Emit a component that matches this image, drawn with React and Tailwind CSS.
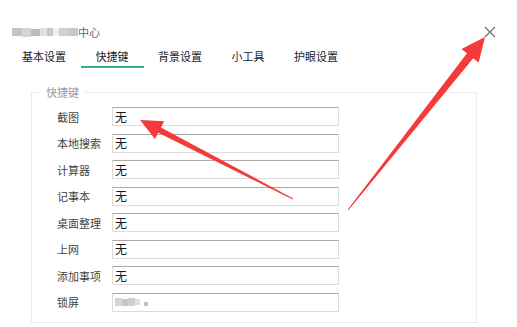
import React from "react";

const rows = [
  ["截图", "无"],
  ["本地搜索", "无"],
  ["计算器", "无"],
  ["记事本", "无"],
  ["桌面整理", "无"],
  ["上网", "无"],
  ["添加事项", "无"],
  ["锁屏", null],
];

const tabs = ["基本设置", "快捷键", "背景设置", "小工具", "护眼设置"];

export default function App() {
  return (
    <div
      className="relative w-[517px] h-[327px] bg-white overflow-hidden"
      style={{ fontFamily: '"Noto Sans CJK SC", "Noto Sans", sans-serif' }}
    >
      {/* title row */}
      <div className="flex items-center justify-between pt-[24px] pl-[12px] pr-[21px] h-[40px]">
        <div className="flex items-center h-[16px] text-[11px] leading-[16px] text-[#666]">
          <div className="flex items-center h-[9px] blur-[0.6px]">
            <span className="w-[10px] h-[8px] bg-[#c4c4c4]"></span>
            <span className="w-[9px] h-[9px] bg-[#d6d6d6]"></span>
            <span className="w-[9px] h-[7px] bg-[#bcbcbc]"></span>
            <span className="w-[7px] h-[8px] bg-[#e2e2e2]"></span>
            <span className="w-[6px] h-[8px] bg-[#c9c9c9]"></span>
            <span className="w-[6px] h-[6px] bg-[#ededed]"></span>
            <span className="w-[9px] h-[8px] bg-[#d0d0d0]"></span>
            <span className="w-[10px] h-[8px] bg-[#c7c7c7]"></span>
          </div>
          <span>中心</span>
        </div>
        <svg width="12" height="12" viewBox="0 0 12 12" className="block">
          <path d="M1 1 L11 11 M11 1 L1 11" stroke="#6b6b6b" strokeWidth="1.1" fill="none" />
        </svg>
      </div>

      {/* tabs */}
      <div className="flex pl-[10px] mt-[8px]">
        {tabs.map((t, i) => (
          <div key={t} className="w-[68px] flex flex-col items-center">
            <span className="h-[16px] text-[11px] leading-[16px] text-[#222]">{t}</span>
            <div
              className={
                "mt-[2px] h-[2px] w-[63px] " + (i === 1 ? "bg-[#36b37a]" : "bg-transparent")
              }
            ></div>
          </div>
        ))}
      </div>

      {/* fieldset */}
      <div className="relative mt-[24px] ml-[31px] w-[446px] border border-[#ededed] pt-[14px] pb-[10px] pl-[25px]">
        <span className="absolute -top-[9px] left-[9px] px-[5px] bg-white text-[11px] leading-[16px] text-[#999]">
          快捷键
        </span>
        <div className="flex flex-col gap-[7.57px]">
          {rows.map(([label, val]) => (
            <div key={label} className="flex items-center h-[19px]">
              <span className="w-[55px] text-[11px] leading-[16px] text-[#444]">{label}</span>
              <div className="w-[227px] h-[19px] border border-[#dcdcdc] border-t-[#aaaaaa] flex items-center pl-[2px]">
                {val ? (
                  <span className="text-[12px] leading-[16px] text-[#1a1a1a]">{val}</span>
                ) : (
                  <div className="flex items-center gap-[4px] blur-[0.5px]">
                    <div className="flex items-center h-[8px]">
                      <span className="w-[7px] h-[8px] bg-[#d5d5d5]"></span>
                      <span className="w-[6px] h-[7px] bg-[#c6c6c6]"></span>
                      <span className="w-[7px] h-[8px] bg-[#cfcfcf]"></span>
                      <span className="w-[5px] h-[6px] bg-[#dedede]"></span>
                    </div>
                    <span className="w-[4px] h-[4px] mt-[3px] bg-[#bdbdbd]"></span>
                  </div>
                )}
              </div>
            </div>
          ))}
        </div>
      </div>

      {/* annotation arrows */}
      <svg
        className="absolute inset-0 pointer-events-none"
        width="517"
        height="327"
        viewBox="0 0 517 327"
      >
        <polygon
          points="140,120 164.2,121.2 161,127.4 293.2,198.6 292.8,199.4 158.2,132.8 155,139"
          fill="#f43a3a"
        />
        <polygon
          points="485,37 478.7,62.6 473.2,58.3 348.4,210.3 347.6,209.7 467,53.3 461.5,49"
          fill="#f43a3a"
        />
      </svg>
    </div>
  );
}
